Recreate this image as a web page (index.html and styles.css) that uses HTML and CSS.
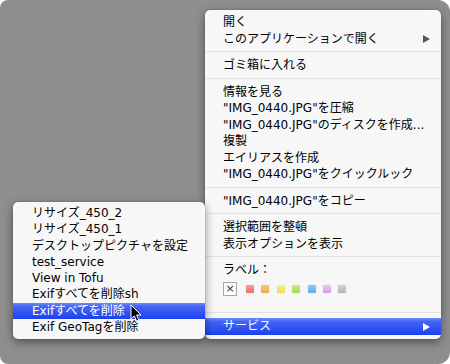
FILE: index.html
```html
<!DOCTYPE html>
<html lang="ja">
<head>
<meta charset="utf-8">
<link rel="stylesheet" href="styles.css">
</head>
<body>
<div class="desk">
  <div class="menu main">
    <div class="item">開く</div>
    <div class="item sub">このアプリケーションで開く<span class="arrow"></span></div>
    <div class="sep"></div>
    <div class="item">ゴミ箱に入れる</div>
    <div class="sep"></div>
    <div class="item">情報を見る</div>
    <div class="item">"IMG_0440.JPG"を圧縮</div>
    <div class="item">"IMG_0440.JPG"のディスクを作成...</div>
    <div class="item">複製</div>
    <div class="item">エイリアスを作成</div>
    <div class="item">"IMG_0440.JPG"をクイックルック</div>
    <div class="sep"></div>
    <div class="item">"IMG_0440.JPG"をコピー</div>
    <div class="sep"></div>
    <div class="item">選択範囲を整頓</div>
    <div class="item">表示オプションを表示</div>
    <div class="sep"></div>
    <div class="item">ラベル：</div>
    <div class="labels">
      <span class="none">×</span>
      <span class="sw red"></span>
      <span class="sw orange"></span>
      <span class="sw yellow"></span>
      <span class="sw green"></span>
      <span class="sw blue"></span>
      <span class="sw purple"></span>
      <span class="sw gray"></span>
    </div>
    <div class="sep"></div>
    <div class="item sub hl">サービス<span class="arrow"></span></div>
  </div>
  <div class="menu services">
    <div class="item">リサイズ_450_2</div>
    <div class="item">リサイズ_450_1</div>
    <div class="item">デスクトップピクチャを設定</div>
    <div class="item">test_service</div>
    <div class="item">View in Tofu</div>
    <div class="item">Exifすべてを削除sh</div>
    <div class="item hl">Exifすべてを削除</div>
    <div class="item">Exif GeoTagを削除</div>
  </div>
  <svg class="cursor" width="12" height="19" viewBox="0 0 12 19">
    <path d="M1 1 L1 15 L4.3 11.8 L6.6 17.2 L8.8 16.2 L6.6 11 L11 11 Z" fill="#000" stroke="#fff" stroke-width="1" stroke-linejoin="round"/>
  </svg>
</div>
</body>
</html>
```
FILE: styles.css
```css
html, body {
  margin: 0;
  padding: 0;
  background: #ffffff;
}
.desk {
  position: relative;
  width: 450px;
  height: 364px;
  background: #8e8e8e;
  border-radius: 8px 12px 12px 8px;
  overflow: hidden;
  font-family: "DejaVu Sans", "Noto Sans CJK JP", sans-serif;
  font-size: 12px;
  color: #000;
}
.menu {
  position: absolute;
  background: #f7f7f7;
  border-radius: 5px;
  box-shadow: 0 3px 10px rgba(0, 0, 0, 0.45), 0 0 1px rgba(0, 0, 0, 0.4);
  box-sizing: border-box;
}
.main {
  left: 205px;
  top: 10px;
  width: 236px;
  height: 329px;
  padding: 4px 0 3px;
}
.services {
  left: 13px;
  top: 202px;
  width: 192px;
  height: 137px;
  padding: 3px 0 5px;
}
.item {
  position: relative;
  height: 16.5px;
  line-height: 16.5px;
  padding-left: 18px;
  white-space: nowrap;
}
.services .item {
  height: 16.3px;
  line-height: 16.3px;
  padding-left: 19px;
}
.sep {
  height: 10px;
  position: relative;
}
.sep::after {
  content: "";
  position: absolute;
  left: 0;
  right: 0;
  top: 4px;
  height: 1px;
  background: #e2e2e2;
}
.main .hl {
  height: 17px;
  line-height: 17px;
}
.hl {
  background: linear-gradient(#6d8bf9 0%, #4565f6 20%, #2c4ff3 70%, #1c3ff0 100%);
  color: #fff;
}
.arrow {
  position: absolute;
  right: 11px;
  top: 50%;
  margin-top: -4px;
  width: 0;
  height: 0;
  border-top: 4px solid transparent;
  border-bottom: 4px solid transparent;
  border-left: 7px solid #555;
}
.hl .arrow {
  border-left-color: #fff;
}
.labels {
  height: 29.5px;
  padding-left: 18px;
  display: flex;
  align-items: flex-start;
  box-sizing: border-box;
  padding-top: 3.5px;
}
.none {
  width: 12px;
  height: 12px;
  border: 1px solid #a8a8a8;
  background: #fff;
  font-size: 11px;
  line-height: 12px;
  text-align: center;
  color: #333;
  margin-right: 9px;
  box-shadow: inset 0 0 1px rgba(0,0,0,0.15);
}
.sw {
  width: 8px;
  height: 8px;
  margin-top: 3px;
  margin-right: 7.4px;
  border-radius: 1px;
  box-shadow: 0 0 1px rgba(0,0,0,0.3);
}
.red { background: linear-gradient(#f79c9c, #ee6e6e); }
.orange { background: linear-gradient(#fbc878, #f5a94a); }
.yellow { background: linear-gradient(#f8ef88, #f1dd4e); }
.green { background: linear-gradient(#c9ea86, #a6d652); }
.blue { background: linear-gradient(#8fcaf8, #5aaef3); }
.purple { background: linear-gradient(#e9c3f0, #d6a0e4); }
.gray { background: linear-gradient(#d2d2d2, #b4b4b4); }
.cursor {
  position: absolute;
  left: 130px;
  top: 304px;
}
```
